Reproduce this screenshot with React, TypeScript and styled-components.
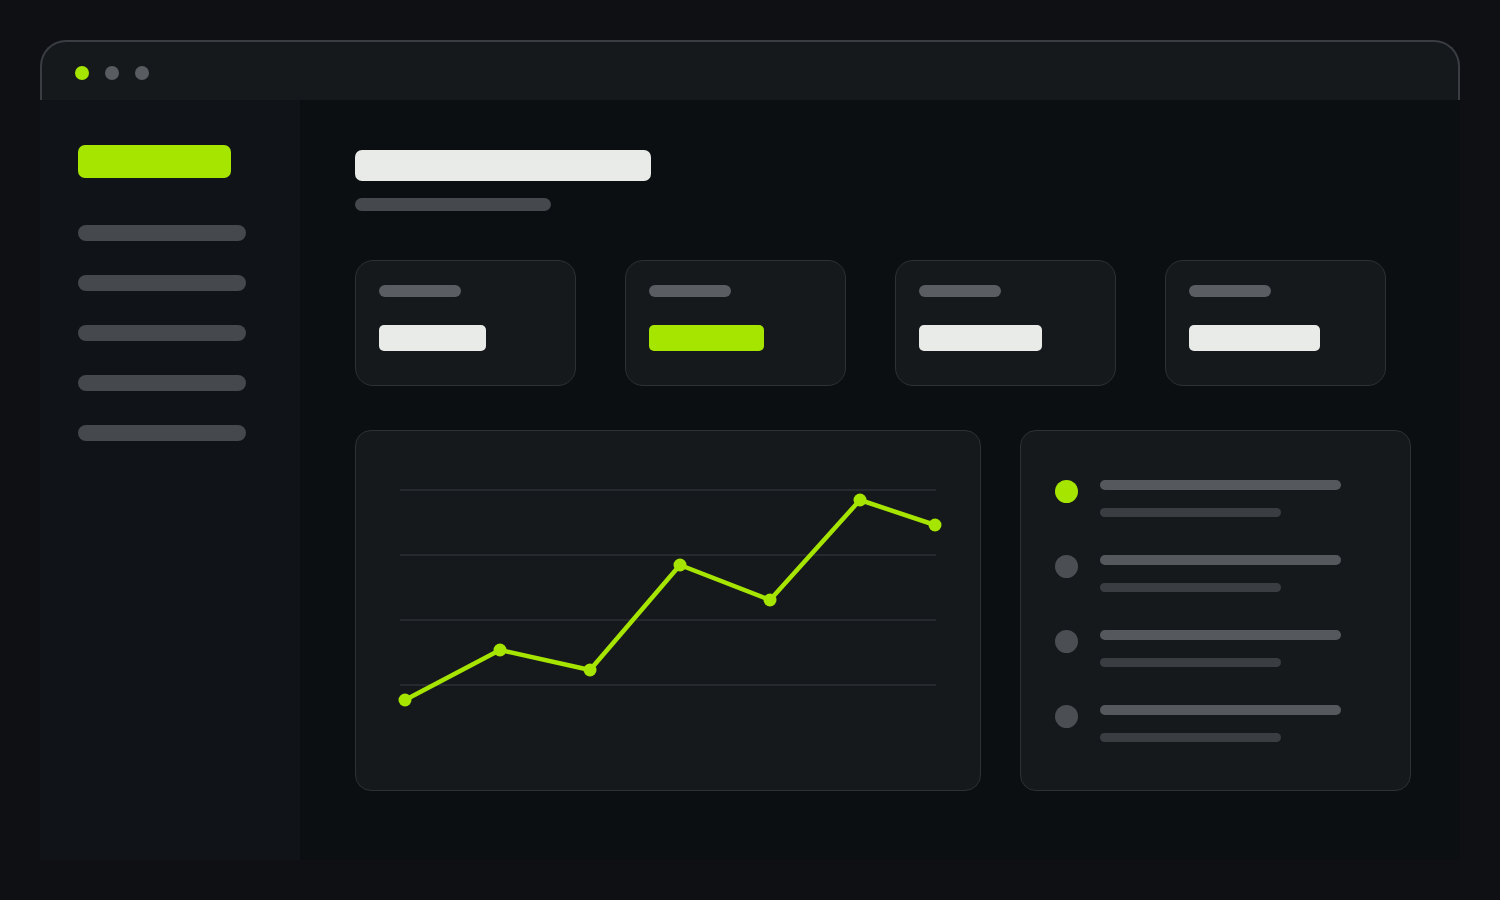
import * as React from 'react'
import styled, { createGlobalStyle } from 'styled-components';

const GlobalStyle = createGlobalStyle`
    html, body {
        margin: 0;
        padding: 0;
        background: #0f1014;
        font-family: "Inter", "Liberation Sans", sans-serif;
    }
`;

const lime = '#a6e500';

export const Page = styled.div`
    width: 1500px;
    height: 900px;
    padding: 40px;
    box-sizing: border-box;
    background: #0f1014;
`;

export const Window = styled.div`
    display: flex;
    flex-direction: column;
    width: 1420px;
    height: 820px;
`;

export const TitleBar = styled.div`
    display: flex;
    align-items: center;
    gap: 16px;
    height: 60px;
    box-sizing: border-box;
    padding: 4px 0 0 33px;
    background: #16191c;
    border: 2px solid #3a3d42;
    border-bottom: none;
    border-radius: 26px 26px 0 0;
`;

export const Dot = styled.span<{ $on?: boolean }>`
    width: 14px;
    height: 14px;
    border-radius: 50%;
    background: ${p => (p.$on ? lime : '#595d61')};
`;

export const Body = styled.div`
    display: flex;
    flex: 1;
`;

export const Sidebar = styled.div`
    display: flex;
    flex-direction: column;
    width: 260px;
    padding: 45px 0 0 38px;
    box-sizing: border-box;
    background: #101318;
`;

export const Bar = styled.div<{ $w: number; $h: number; $c: string; $r?: number }>`
    width: ${p => p.$w}px;
    height: ${p => p.$h}px;
    background: ${p => p.$c};
    border-radius: ${p => (p.$r ?? p.$h / 2)}px;
    flex-shrink: 0;
`;

export const NavList = styled.div`
    display: flex;
    flex-direction: column;
    gap: 34px;
    margin-top: 47px;
`;

export const Main = styled.div`
    flex: 1;
    display: flex;
    flex-direction: column;
    padding: 50px 0 0 55px;
    background: #0c0f12;
`;

export const Heading = styled.div`
    display: flex;
    flex-direction: column;
    gap: 17px;
`;

export const Stats = styled.div`
    display: flex;
    gap: 49px;
    margin-top: 49px;
`;

export const StatCard = styled.div`
    display: flex;
    flex-direction: column;
    gap: 28px;
    width: 221px;
    height: 126px;
    box-sizing: border-box;
    padding: 24px 23px;
    background: #16191c;
    border: 1px solid #2d3034;
    border-radius: 18px;
`;

export const Panels = styled.div`
    display: flex;
    gap: 39px;
    margin-top: 44px;
`;

export const Panel = styled.div<{ $w: number }>`
    width: ${p => p.$w}px;
    height: 361px;
    box-sizing: border-box;
    background: #16191c;
    border: 1px solid #2d3034;
    border-radius: 16px;
`;

export const ListPanel = styled(Panel)`
    display: flex;
    flex-direction: column;
    gap: 38px;
    padding: 49px 0 0 34px;
`;

export const Item = styled.div`
    display: flex;
    gap: 22px;
`;

export const Bullet = styled.span<{ $on?: boolean }>`
    width: 23px;
    height: 23px;
    border-radius: 50%;
    background: ${p => (p.$on ? lime : '#4b4f53')};
`;

export const ItemLines = styled.div`
    display: flex;
    flex-direction: column;
    gap: 18px;
`;

const points: [number, number][] = [
    [50, 270], [145, 220], [235, 240], [325, 135], [415, 170], [505, 70], [580, 95],
];

const Chart = () => (
    <svg width="624" height="359" viewBox="1 1 624 359" style={{ display: 'block' }}>
        {[60, 125, 190, 255].map(y => (
            <line key={y} x1="45" x2="581" y1={y} y2={y} stroke="#2c2f33" strokeWidth="1.5" />
        ))}
        <polyline
            points={points.map(p => p.join(',')).join(' ')}
            fill="none"
            stroke={lime}
            strokeWidth="4.5"
            strokeLinejoin="round"
            strokeLinecap="round"
        />
        {points.map(([x, y]) => (
            <circle key={x} cx={x} cy={y} r="6.5" fill={lime} />
        ))}
    </svg>
);

const stats = [
    { w: 107, c: '#e8ebe8' },
    { w: 115, c: lime },
    { w: 123, c: '#e8ebe8' },
    { w: 131, c: '#e8ebe8' },
];

export default function App() {
    return (
        <>
            <GlobalStyle />
            <Page>
                <Window>
                    <TitleBar>
                        <Dot $on />
                        <Dot />
                        <Dot />
                    </TitleBar>
                    <Body>
                        <Sidebar>
                            <Bar $w={153} $h={33} $c={lime} $r={7} />
                            <NavList>
                                {[0, 1, 2, 3, 4].map(i => (
                                    <Bar key={i} $w={168} $h={16} $c="#45494e" />
                                ))}
                            </NavList>
                        </Sidebar>
                        <Main>
                            <Heading>
                                <Bar $w={296} $h={31} $c="#e8ebe8" $r={7} />
                                <Bar $w={196} $h={13} $c="#45494e" />
                            </Heading>
                            <Stats>
                                {stats.map((s, i) => (
                                    <StatCard key={i}>
                                        <Bar $w={82} $h={12} $c="#5a5e62" />
                                        <Bar $w={s.w} $h={26} $c={s.c} $r={5} />
                                    </StatCard>
                                ))}
                            </Stats>
                            <Panels>
                                <Panel $w={626}>
                                    <Chart />
                                </Panel>
                                <ListPanel $w={391}>
                                    {[0, 1, 2, 3].map(i => (
                                        <Item key={i}>
                                            <Bullet $on={i === 0} />
                                            <ItemLines>
                                                <Bar $w={241} $h={10} $c="#55595e" />
                                                <Bar $w={181} $h={9} $c="#3a3e42" />
                                            </ItemLines>
                                        </Item>
                                    ))}
                                </ListPanel>
                            </Panels>
                        </Main>
                    </Body>
                </Window>
            </Page>
        </>
    )
}
